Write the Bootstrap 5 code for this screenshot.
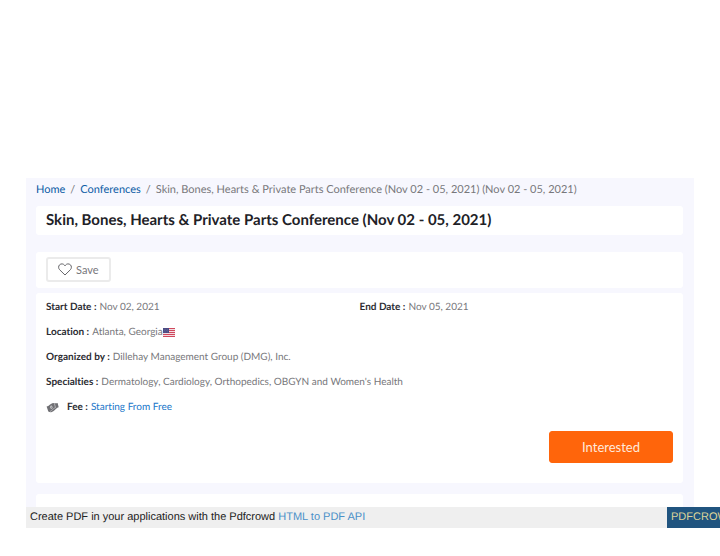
<!DOCTYPE html>
<html lang="en">
<head>
<meta charset="utf-8">
<meta name="viewport" content="width=device-width, initial-scale=1">
<title>Skin, Bones, Hearts &amp; Private Parts Conference</title>
<link href="https://cdn.jsdelivr.net/npm/bootstrap@5.3.0/dist/css/bootstrap.min.css" rel="stylesheet">
<style>
body { font-family: Lato, sans-serif; font-size: 10px; line-height: 15px; color: #77777b; background: #fff; text-rendering: geometricPrecision; font-variant-ligatures: none; }
a { text-decoration: none; }
.sheet { padding: 178px 0 28px 26px; }
.event-page { background: #f7f7fe; margin-right: 26px; padding: 0 11px 0 10px; }
.breadcrumb { font-size: 11px; line-height: 23px; --bs-breadcrumb-item-padding-x: 5px; --bs-breadcrumb-margin-bottom: 5px; --bs-breadcrumb-divider-color: #77777b; --bs-breadcrumb-item-active-color: #77777b; }
.breadcrumb a { color: #0c5ca5; }
.panel { background: #fff; border-radius: 3px; padding: 0 10px; }
.event-title { font-size: 15px; line-height: 29px; font-weight: 700; color: #212126; margin: 0 0 17px; }
.toolbar-panel { padding-top: 5px; padding-bottom: 6px; margin-bottom: 5px; }
.btn-save { --bs-btn-padding-x: 10px; --bs-btn-padding-y: 0; --bs-btn-font-size: 11px; --bs-btn-line-height: 21px; --bs-btn-color: #77777b; --bs-btn-border-color: #ebebeb; --bs-btn-border-width: 2px; --bs-btn-border-radius: 3px; gap: 4px; }
.details { padding-top: 7px; padding-bottom: 20px; margin-bottom: 11px; }
.fact { margin-bottom: 10px; }
.fact b { color: #2c2c32; margin-right: 3px; }
.fee { margin-bottom: 16px; }
.fee a { color: #1976c9; }
.btn-interested { --bs-btn-bg: #ff650b; --bs-btn-border-color: #ff650b; --bs-btn-color: #ffe9dc; --bs-btn-font-size: 13px; --bs-btn-line-height: 20px; --bs-btn-padding-y: 5px; --bs-btn-padding-x: 32px; --bs-btn-border-radius: 3px; --bs-btn-hover-bg: #e95600; --bs-btn-hover-color: #fff; }
.next-panel { height: 13px; border-radius: 3px 3px 0 0; }
.pdf-bar { font-family: "Liberation Sans", Arial, sans-serif; font-size: 11px; line-height: 21px; color: #222; background: #efefef; }
.pdf-bar a { color: #4a90c8; }
.pdf-bar .pdf-brand { width: 53px; background: #20547f; color: #ddd49a; }
</style>
<script src="https://cdn.jsdelivr.net/npm/bootstrap@5.3.0/dist/js/bootstrap.bundle.min.js"></script>
</head>
<body>
<div class="sheet">
  <main class="event-page">
    <nav aria-label="breadcrumb">
      <ol class="breadcrumb">
        <li class="breadcrumb-item"><a href="#">Home</a></li>
        <li class="breadcrumb-item"><a href="#">Conferences</a></li>
        <li class="breadcrumb-item active" aria-current="page">Skin, Bones, Hearts &amp; Private Parts Conference (Nov 02 - 05, 2021) (Nov 02 - 05, 2021)</li>
      </ol>
    </nav>
    <h1 class="panel event-title">Skin, Bones, Hearts &amp; Private Parts Conference (Nov 02 - 05, 2021)</h1>
    <div class="panel toolbar-panel d-flex">
      <button type="button" class="btn btn-save d-flex align-items-center">
        <svg width="14" height="13" viewBox="0 0 14 13" fill="none" stroke="#66666a" stroke-width="1" stroke-linejoin="round" aria-hidden="true"><path d="M7 12 1.600 6.700C.3 5.300.3 3.200 1.500 1.900 3 .4 5.400.6 6.500 2.200L7 2.900l.5-.7C8.600.6 11 .4 12.500 1.900c1.200 1.300 1.200 3.400-.1 4.800Z"/></svg>
        Save
      </button>
    </div>
    <section class="panel details">
      <div class="row g-0">
        <div class="col-6 fact"><b>Start Date :</b>Nov 02, 2021</div>
        <div class="col-6 fact"><b>End Date :</b>Nov 05, 2021</div>
      </div>
      <div class="fact d-flex align-items-center"><b>Location :</b>Atlanta, Georgia
        <svg width="12" height="9" viewBox="0 0 12 9" role="img" aria-label="United States"><path fill="#f2dce2" d="M0 0h12v9H0z"/><path stroke="#d0485c" stroke-width="1" d="M0 .5h12M0 2.500h12M0 4.500h12M0 6.500h12M0 8.500h12"/><path fill="#4a4a82" d="M0 0h6v5H0z"/><path stroke="#8a8ab4" stroke-width=".5" stroke-dasharray=".7 1" d="M.7 1.300h5M1.200 2.600h4M.7 3.900h5"/></svg>
      </div>
      <div class="fact"><b>Organized by :</b>Dillehay Management Group (DMG), Inc.</div>
      <div class="fact"><b>Specialties :</b>Dermatology, Cardiology, Orthopedics, OBGYN and Women's Health</div>
      <div class="fact fee d-flex align-items-center">
        <svg class="me-2" width="13" height="11" viewBox="0 0 13 11" aria-hidden="true"><path fill="#707074" d="M.6 4.500C3 4 4.500 1.400 7 .9l2 .4c1 .1 1.800-.1 2.600-.4l1.100 4.300c-2.700.5-4.300 4.200-7.500 5-1.200.2-2-.3-2.900-.8Z"/><path fill="none" stroke="#d8d8db" stroke-width=".6" d="M8.300 1.300 9.500 5.500C7.500 6.200 6 8.600 4 9.500"/><ellipse cx="5.300" cy="5.200" rx="1.200" ry="1.600" transform="rotate(-20 5.300 5.200)" fill="#d4d4d7"/><path stroke="#66666a" stroke-width=".6" d="m5 4.300.6 1.800"/></svg>
        <b>Fee :</b><a href="#">Starting From Free</a>
      </div>
      <div class="d-flex justify-content-end"><button type="button" class="btn btn-interested">Interested</button></div>
    </section>
    <div class="panel next-panel"></div>
  </main>
  <footer class="pdf-bar d-flex justify-content-between">
    <div class="px-1">Create PDF in your applications with the Pdfcrowd <a href="#">HTML to PDF API</a></div>
    <a href="#" class="pdf-brand px-1 overflow-hidden text-nowrap">PDFCROWD</a>
  </footer>
</div>
</body>
</html>
